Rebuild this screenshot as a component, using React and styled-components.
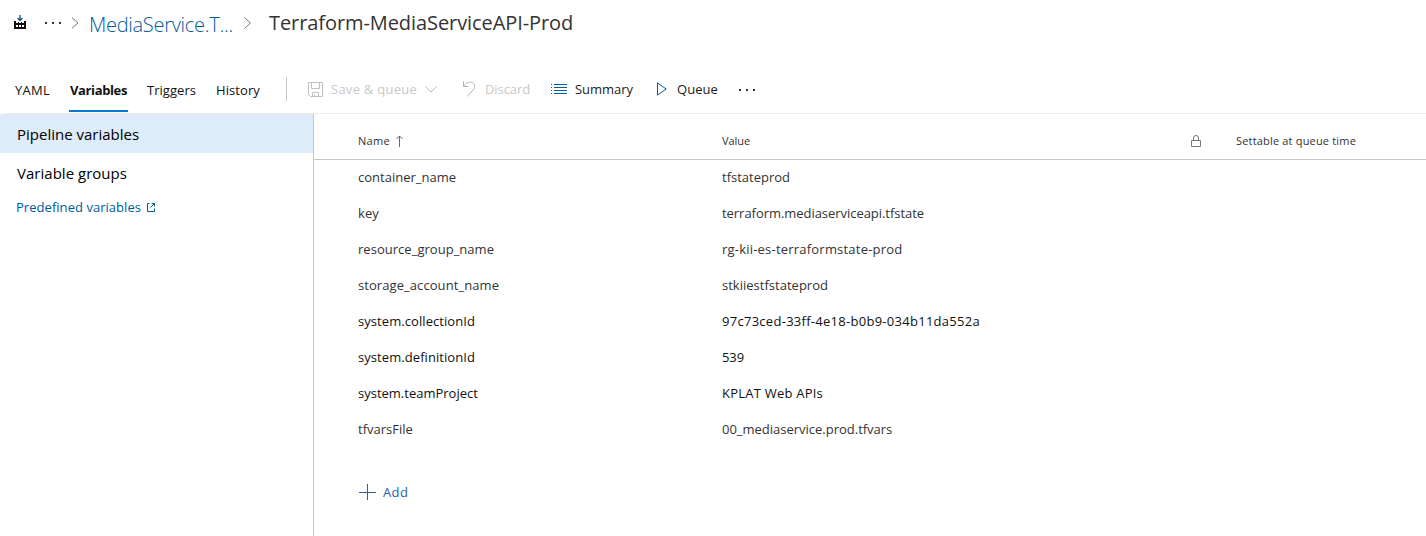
import React from "react";
import styled, { createGlobalStyle } from "styled-components";

const GlobalStyle = createGlobalStyle`
  * { box-sizing: border-box; }
  body { margin: 0; background: #fff; color: #000; font-family: "Open Sans", "Noto Sans", sans-serif; }
`;

const Label = styled.span`
  display: block;
  flex: none;
  width: ${(p) => p.$w}px;
  white-space: nowrap;
  letter-spacing: ${(p) => p.$ls || 0}px;
`;

const Page = styled.div`
  display: flex;
  flex-direction: column;
  width: 1426px;
  height: 536px;
  overflow: hidden;
`;

const Breadcrumb = styled.header`
  display: flex;
  align-items: center;
  height: 46px;
  padding-left: 13px;
  flex: none;
`;
const BuildIcon = styled.svg`
  margin: 0 18px 2px 0;
  flex: none;
`;
const Dots = styled.svg`
  flex: none;
  margin-right: ${(p) => p.$mr || 0}px;
`;
const Chevron = styled.svg`
  flex: none;
  margin-right: ${(p) => p.$mr}px;
`;
const Crumb = styled(Label)`
  font-size: 20px;
  font-weight: 300;
  color: #005a9e;
  line-height: 24px;
  margin-right: 12px;
  padding-top: 4px;
`;
const Title = styled(Label)`
  font-size: 20px;
  line-height: 24px;
  color: #333;
  margin-top: -1px;
`;

const Toolbar = styled.nav`
  display: flex;
  height: 68px;
  margin-left: 5px;
  padding: 20px 0 0 10px;
  border-bottom: 1px solid #eaeaea;
  flex: none;
`;
const Tab = styled.div`
  height: 46px;
  padding: 15px 1px 0;
  margin: 0 19px 0 -1px;
  font-size: 13px;
  line-height: 18px;
  color: #111;
  font-weight: ${(p) => (p.$active ? 700 : 400)};
  box-shadow: ${(p) => (p.$active ? "inset 0 -2px #0078d4" : "none")};
`;
const Divider = styled.div`
  width: 1px;
  height: 24px;
  margin: 11px 21px 0 6px;
  background: #c8c8c8;
  flex: none;
`;
const Action = styled.div`
  display: flex;
  align-items: center;
  height: 20px;
  margin: 13px ${(p) => p.$mr}px 0 0;
  gap: ${(p) => p.$gap}px;
  font-size: 13px;
  line-height: 18px;
  color: ${(p) => (p.$disabled ? "#c8c8c8" : "#212121")};
`;

const Body = styled.main`
  display: flex;
  flex: 1;
  min-height: 0;
`;
const Sidebar = styled.aside`
  width: 314px;
  border-right: 1px solid #c8c8c8;
  flex: none;
`;
const SideItem = styled.div`
  display: flex;
  align-items: center;
  height: 39px;
  padding-left: 17px;
  font-size: 15px;
  background: ${(p) => (p.$active ? "#deebf8" : "none")};
`;
const SideLink = styled.div`
  display: flex;
  align-items: center;
  gap: 5px;
  height: 30px;
  padding-left: 16px;
  font-size: 13px;
  color: #005a9e;
`;

const Table = styled.section`
  flex: 1;
  display: flex;
  flex-direction: column;
`;
const columns = "364px 469px 45px 1fr";
const HeadRow = styled.div`
  display: grid;
  grid-template-columns: ${columns};
  align-items: center;
  height: 46px;
  padding: 8px 0 0 44px;
  border-bottom: 1px solid #c8c8c8;
  font-size: 11px;
  color: #333;
`;
const HeadCell = styled.div`
  display: flex;
  align-items: center;
  gap: 6px;
`;
const Row = styled.div`
  display: grid;
  grid-template-columns: ${columns};
  align-items: center;
  height: 36px;
  padding: 0 0 2px 44px;
  font-size: 13px;
  color: ${(p) => (p.$system ? "#111" : "#333")};
`;
const AddButton = styled.div`
  display: flex;
  align-items: center;
  gap: 7px;
  height: 24px;
  margin: 32px 0 0 45px;
  font-size: 13px;
  color: #1f62b5;
`;

const ROWS = [
  ["container_name", 98, 0, "tfstateprod", 68, 0],
  ["key", 21, 0.1, "terraform.mediaserviceapi.tfstate", 202, -0.046],
  ["resource_group_name", 136, 0.027, "rg-kii-es-terraformstate-prod", 180, 0.21],
  ["storage_account_name", 141, 0.073, "stkiiestfstateprod", 106, 0.013],
  ["system.collectionId", 117, 0.067, "97c73ced-33ff-4e18-b0b9-034b11da552a", 258, 0.278],
  ["system.definitionId", 117, 0.066, "539", 22, -0.1],
  ["system.teamProject", 120, 0, "KPLAT Web APIs", 101, 0.227],
  ["tfvarsFile", 55, 0, "00_mediaservice.prod.tfvars", 170, -0.01],
];

export default function App() {
  return (
    <Page>
      <GlobalStyle />
      <Breadcrumb>
        <BuildIcon width="14" height="16" viewBox="0 0 14 16" shapeRendering="crispEdges">
          <path d="M1 7h2v1h8V7h2v8H1z" fill="#111" />
          <path d="M3 8h2v1H3zM6 8h2v1H6zM9 8h2v1H9zM3 11h2v2H3zM6 11h2v2H6zM9 11h2v2H9z" fill="#fff" />
          <path d="M7 1v5.500M4.500 4 7 6.500 9.500 4" stroke="#1d4e78" strokeWidth="1.300" fill="none" shapeRendering="auto" />
        </BuildIcon>
        <Dots width="16" height="4" $mr={10}>
          <path d="M0 1h2v2H0zM7 1h2v2H7zM14 1h2v2h-2z" fill="#333" />
        </Dots>
        <Chevron width="8" height="12" $mr={10}>
          <path d="M.8.5 7 6 .8 11.500" fill="none" stroke="#777" />
        </Chevron>
        <Crumb $w={143} $ls={-0.28}>MediaService.T...</Crumb>
        <Chevron width="7" height="12" $mr={18}>
          <path d="M.5.5 6.500 6 .5 11.500" fill="none" stroke="#777" />
        </Chevron>
        <Title $w={304} $ls={-0.08}>Terraform-MediaServiceAPI-Prod</Title>
      </Breadcrumb>
      <Toolbar>
        <Tab><Label $w={35} $ls={0.25}>YAML</Label></Tab>
        <Tab $active><Label $w={57} $ls={-0.375}>Variables</Label></Tab>
        <Tab><Label $w={49} $ls={0.04}>Triggers</Label></Tab>
        <Tab><Label $w={44} $ls={0.09}>History</Label></Tab>
        <Divider />
        <Action $disabled $gap={8} $mr={25}>
          <svg width="15" height="15" fill="none" stroke="#c0c0c0">
            <path d="M.5.5h14v14h-12l-2-2zM3.500.5v6h8v-6M4.500 14.500v-4h6v4M6.500 12.500v2" />
          </svg>
          <Label $w={86} $ls={0.26}>Save &amp; queue</Label>
          <svg width="12" height="7" fill="none" stroke="#b8b8b8"><path d="M.5.5 6 6 11.500.5" /></svg>
        </Action>
        <Action $disabled $gap={9} $mr={21}>
          <svg width="14" height="16" fill="none" stroke="#b0b0b0">
            <path d="M1.500.5v5h5M1.500 5.500C4 2 7 .7 9.500 1.400 13 2.400 13.500 6 11.500 8.500L5 15.500" />
          </svg>
          <Label $w={45} $ls={-0.09}>Discard</Label>
        </Action>
        <Action $gap={8} $mr={23}>
          <svg width="16" height="12" stroke="#005a9e">
            <path d="M0 1.500h1M3 1.500h13M0 4.500h1M3 4.500h13M0 7.500h1M3 7.500h13M0 10.500h1M3 10.500h13" />
          </svg>
          <Label $w={58} $ls={-0.03}>Summary</Label>
        </Action>
        <Action $gap={10} $mr={20}>
          <svg width="11" height="14" fill="none" stroke="#005a9e"><path d="M1.500.900v12.200L10.200 7z" /></svg>
          <Label $w={41} $ls={0.06}>Queue</Label>
        </Action>
        <Action $gap={0} $mr={0}>
          <Dots width="18" height="4"><path d="M1 2h2v2H1zM8 2h2v2H8zM15 2h2v2h-2z" fill="#333" /></Dots>
        </Action>
      </Toolbar>
      <Body>
        <Sidebar>
          <SideItem $active><Label $w={122}>Pipeline variables</Label></SideItem>
          <SideItem><Label $w={110} $ls={0.02}>Variable groups</Label></SideItem>
          <SideLink>
            <Label $w={125} $ls={0.04}>Predefined variables</Label>
            <svg width="10" height="9" fill="none" stroke="#005a9e">
              <path d="M3.500 .5H1.500v8h7V5.500M5.500 .5h3V3.500M8.500.5l-4 4" />
            </svg>
          </SideLink>
        </Sidebar>
        <Table>
          <HeadRow>
            <HeadCell>
              <Label $w={32} $ls={0.3}>Name</Label>
              <svg width="7" height="12" fill="none" stroke="#666"><path d="M3.500 12V1M.5 4l3-3 3 3" /></svg>
            </HeadCell>
            <Label $w={28} $ls={-0.07}>Value</Label>
            <svg width="11" height="12" fill="none" stroke="#777">
              <path d="M.5 5.500h9v6h-9zM2.500 5.500V3a2.500 2.500 0 0 1 5 0v2.500" />
            </svg>
            <Label $w={120} $ls={0.178}>Settable at queue time</Label>
          </HeadRow>
          {ROWS.map(([name, nameW, nameLs, value, valueW, valueLs]) => (
            <Row key={name} $system={name.startsWith("system")}>
              <Label $w={nameW} $ls={nameLs}>{name}</Label>
              <Label $w={valueW} $ls={valueLs}>{value}</Label>
            </Row>
          ))}
          <AddButton>
            <svg width="17" height="16" stroke="#1f62b5"><path d="M8.500 0v16M0 8.500h17" /></svg>
            <Label $w={25} $ls={0.4}>Add</Label>
          </AddButton>
        </Table>
      </Body>
    </Page>
  );
}
